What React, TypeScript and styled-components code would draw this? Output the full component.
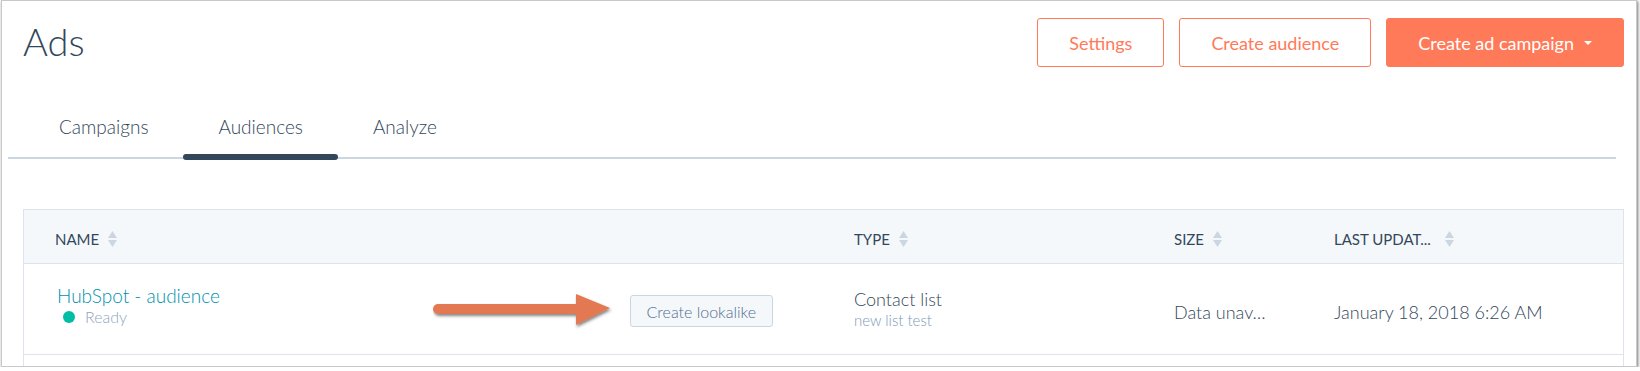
import styled, { createGlobalStyle } from "styled-components";

const GlobalStyle = createGlobalStyle`
  body {
    margin: 0;
    background: #ffffff;
    font-family: "Lato", "Open Sans", sans-serif;
    font-weight: 300;
    color: #33475b;
  }
`;

interface ButtonProps {
  primary?: boolean;
}

interface ColumnProps {
  last?: boolean;
}

// frame of the screenshot
const Frame = styled.div`
  box-sizing: border-box;
  width: 1636px;
  height: 367px;
  margin-left: 1px;
  border: 1px solid #c9c9c9;
  box-shadow: 1px 1px 3px rgba(0, 0, 0, 0.55);
  background: #ffffff;
  overflow: hidden;
`;

const Header = styled.header`
  display: flex;
  justify-content: space-between;
  align-items: flex-start;
  padding: 17px 12px 0 21px;
`;

const Title = styled.h1`
  margin: 4px 0 0;
  font-size: 38px;
  line-height: 38px;
  font-weight: 300;
  color: #33475b;
`;

const Actions = styled.div`
  display: flex;
  gap: 15px;
`;

const Button = styled.button<ButtonProps>`
  display: flex;
  align-items: center;
  gap: 10px;
  height: 49px;
  padding: 0 31px;
  border: 1px solid #ff7a59;
  border-radius: 3px;
  background: ${(props) => (props.primary ? "#ff7a59" : "#ffffff")};
  color: ${(props) => (props.primary ? "#ffffff" : "#ff7a59")};
  font-family: inherit;
  font-weight: 400;
  font-size: 18px;
  cursor: pointer;
`;

const Caret = styled.span`
  width: 0;
  height: 0;
  border-left: 4px solid transparent;
  border-right: 4px solid transparent;
  border-top: 4px solid #ffffff;
`;

// tabs
const TabBar = styled.nav`
  display: flex;
  margin: 48px 20px 0 6px;
  padding-left: 16px;
  border-bottom: 2px solid #cbd6e2;
`;

const Tab = styled.div<{ active?: boolean }>`
  position: relative;
  padding: 0 35px 18px;
  font-size: 19px;
  line-height: 24px;
  color: #33475b;

  &::after {
    content: "";
    display: ${(props) => (props.active ? "block" : "none")};
    position: absolute;
    left: 0;
    right: 0;
    bottom: -3px;
    height: 6px;
    border-radius: 3px;
    background: #33475b;
  }
`;

// table
const Table = styled.div`
  margin: 50px 12px 0 21px;
  border: 1px solid #dfe3eb;
  border-bottom: none;
  min-height: 200px;
`;

const Grid = styled.div`
  display: grid;
  grid-template-columns: 799px 320px 160px 1fr;
`;

const HeadRow = styled(Grid)`
  height: 53px;
  background: #f5f8fa;
  border-bottom: 1px solid #dfe3eb;
`;

const BodyRow = styled(Grid)`
  height: 90px;
  border-bottom: 1px solid #dfe3eb;
`;

const HeadCell = styled.div<ColumnProps>`
  display: flex;
  align-items: center;
  gap: ${(props) => (props.last ? "14px" : "9px")};
  padding: 4px 0 0 31px;
  font-size: 15px;
  font-weight: 400;
  color: #33475b;
`;

const Cell = styled.div`
  display: flex;
  align-items: center;
  padding-left: 31px;
  font-size: 18px;
  color: #33475b;
  min-width: 0;
`;

const NameCell = styled(Cell)`
  padding-left: 33px;
  padding-right: 50px;
`;

const Stack = styled.div<{ lift?: boolean }>`
  display: flex;
  flex-direction: column;
  margin-bottom: ${(props) => (props.lift ? "6px" : "0")};
`;

const AudienceName = styled.a`
  font-size: 19px;
  line-height: 22px;
  color: #0091ae;
  text-decoration: none;
`;

const Status = styled.div`
  display: flex;
  align-items: center;
  gap: 10px;
  margin-left: 6px;
  font-size: 16px;
  line-height: 20px;
  color: #8fa6be;
`;

const Dot = styled.span`
  width: 12px;
  height: 12px;
  border-radius: 50%;
  background: #00bda5;
`;

const Lookalike = styled.div`
  display: flex;
  align-items: center;
  gap: 17px;
  margin-left: auto;
  padding-top: 4px;
`;

const SmallButton = styled.button`
  height: 32px;
  padding: 0 16px;
  border: 1px solid #cbd6e2;
  border-radius: 3px;
  background: #f5f8fa;
  color: #506e91;
  font-family: inherit;
  font-weight: 300;
  font-size: 16px;
  cursor: pointer;
`;

const Primary = styled.span`
  font-size: 18px;
  line-height: 22px;
  color: #33475b;
`;

const Secondary = styled.span`
  font-size: 15px;
  line-height: 20px;
  color: #7c98b6;
`;

const Truncated = styled.span`
  padding-top: 5px;
  font-size: 18px;
  color: #33475b;
  white-space: nowrap;
`;

const SortIcon = () => (
  <svg width="9" height="16" viewBox="0 0 9 16">
    <path d="M4.5 0 L9 7 L0 7 Z" fill="#cbd6e2" />
    <path d="M0 9 L9 9 L4.5 16 Z" fill="#cbd6e2" />
  </svg>
);

const Arrow = () => (
  <svg width="180" height="38" viewBox="0 0 180 38">
    <defs>
      <filter id="shadow" x="-10%" y="-30%" width="120%" height="180%">
        <feDropShadow dx="1" dy="2" stdDeviation="1.4" floodColor="#333" floodOpacity="0.6" />
      </filter>
    </defs>
    <g filter="url(#shadow)" fill="#e27953">
      <rect x="0" y="12" width="148" height="10" rx="5" />
      <path d="M143 2 L177 16 L143 33 Z" />
    </g>
  </svg>
);

const columns = ["TYPE", "SIZE"];

export default function App() {
  return (
    <>
      <GlobalStyle />
      <Frame>
        <Header>
          <Title>Ads</Title>
          <Actions>
            <Button>Settings</Button>
            <Button>Create audience</Button>
            <Button primary>
              Create ad campaign
              <Caret />
            </Button>
          </Actions>
        </Header>

        <TabBar>
          <Tab>Campaigns</Tab>
          <Tab active>Audiences</Tab>
          <Tab>Analyze</Tab>
        </TabBar>

        <Table>
          <HeadRow>
            <HeadCell>
              NAME <SortIcon />
            </HeadCell>
            {columns.map((c) => (
              <HeadCell key={c}>
                {c} <SortIcon />
              </HeadCell>
            ))}
            <HeadCell last>
              LAST UPDAT... <SortIcon />
            </HeadCell>
          </HeadRow>
          <BodyRow>
            <NameCell>
              <Stack lift>
                <AudienceName href="#">HubSpot - audience</AudienceName>
                <Status>
                  <Dot />
                  Ready
                </Status>
              </Stack>
              <Lookalike>
                <Arrow />
                <SmallButton>Create lookalike</SmallButton>
              </Lookalike>
            </NameCell>
            <Cell>
              <Stack>
                <Primary>Contact list</Primary>
                <Secondary>new list test</Secondary>
              </Stack>
            </Cell>
            <Cell>
              <Truncated>Data unav…</Truncated>
            </Cell>
            <Cell>
              <Truncated>January 18, 2018 6:26 AM</Truncated>
            </Cell>
          </BodyRow>
        </Table>
      </Frame>
    </>
  );
}
